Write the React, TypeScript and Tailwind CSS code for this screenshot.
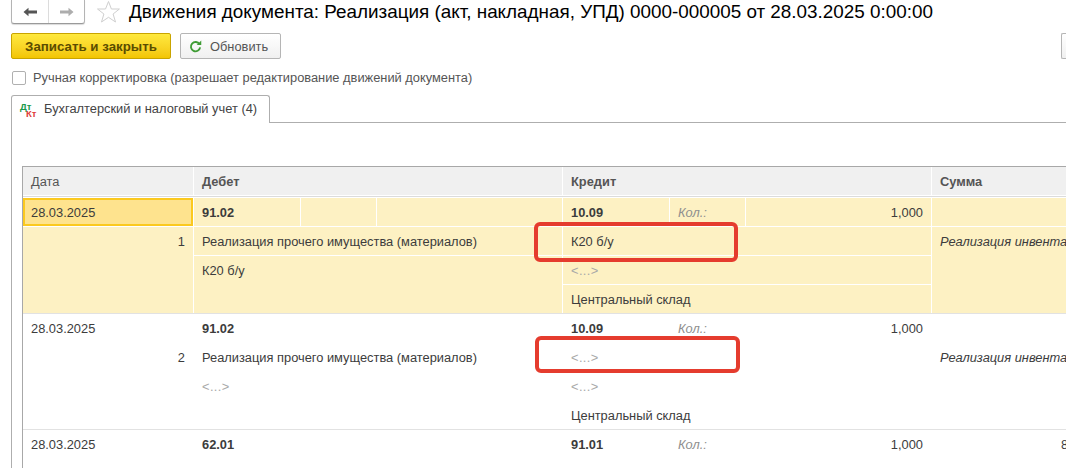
const yellow = "bg-[#fdf1c3]";

function BackForward() {
  return (
    <div className="flex h-[24px] w-[74px] rounded-b-[3px] border border-t-0 border-[#b4b4b4] border-b-[#9a9a9a] bg-white shadow-[0_1px_1px_rgba(0,0,0,0.15)]">
      <div className="flex w-[37px] items-center justify-center border-r border-[#dcdcdc]">
        <svg width="14" height="12" viewBox="0 0 14 12">
          <path d="M5.500 1.700.5 6l5 4.300V7.400H14V4.600H5.500z" fill="#555555" />
        </svg>
      </div>
      <div className="flex flex-1 items-center justify-center">
        <svg width="14" height="12" viewBox="0 0 14 12">
          <path d="M8.500 1.700 13.500 6l-5 4.300V7.400H0V4.600h8.500z" fill="#adadad" />
        </svg>
      </div>
    </div>
  );
}

function Star() {
  return (
    <svg width="25" height="24" viewBox="0 0 25 24" className="ml-[11px]">
      <path
        d="M12.500 1.500 15.400 9h8l-6.300 5 2.400 8-7-4.700L5.500 22l2.400-8L1.500 9h8z"
        fill="none"
        stroke="#cfcfcf"
        strokeWidth="1"
      />
    </svg>
  );
}

function RefreshIcon() {
  return (
    <svg width="13" height="13" viewBox="0 0 14 14">
      <path d="M11.300 4.500A5 5 0 1 0 12 8" fill="none" stroke="#3f9c35" strokeWidth="2" />
      <path d="M8.300 5.300h4.900V.6z" fill="#3f9c35" />
    </svg>
  );
}

function DtKtIcon() {
  return (
    <div className="relative mt-[2px] h-[16px] w-[17px] text-[9.5px] leading-[8px] font-bold">
      <span className="absolute top-0 left-0 text-[#1a9a4a]">Дт</span>
      <span className="absolute top-[7px] left-[6px] text-[#e0403a]">Кт</span>
    </div>
  );
}

function Placeholder() {
  return <span className="tracking-[0.4px] text-[#a8a8a8]">&lt;...&gt;</span>;
}

function AccountCell({
  code,
  qty,
  value,
  bg,
}: {
  code: string;
  qty?: boolean;
  value?: string;
  bg: string;
}) {
  return (
    <div className="grid h-[28px] grid-cols-[106px_75px_1fr] gap-x-px">
      <div className={`${bg} pt-[7px] pl-[8px] font-bold`}>{code}</div>
      <div className={`${bg} pt-[7px] pl-[8px] text-[#8f8f8f] italic`}>{qty ? "Кол.:" : ""}</div>
      <div className={`${bg} pt-[7px] pr-[8px] text-right`}>{value}</div>
    </div>
  );
}

function EntryRow({
  num,
  selected,
  debit2,
  credit2,
  credit3,
}: {
  num: number;
  selected?: boolean;
  debit2: React.ReactNode;
  credit2: React.ReactNode;
  credit3: React.ReactNode;
}) {
  const bg = selected ? yellow : "bg-white";
  const cell = `${bg} pt-[7px] pl-[8px]`;
  return (
    <div className="grid h-[115px] grid-cols-[170px_368px_368px_200px] grid-rows-[28px_28px_28px_28px] gap-px bg-white">
      <div
        className={
          selected
            ? "border-2 border-[#fbc91f] bg-[#fee38e] pt-[5px] pl-[6px]"
            : "bg-white pt-[7px] pl-[8px]"
        }
      >
        28.03.2025
      </div>
      <AccountCell code="91.02" bg={bg} />
      <AccountCell code="10.09" qty value="1,000" bg={bg} />
      <div className={bg} />

      <div className={`${bg} row-span-3 pt-[7px] pr-[8px] text-right`}>{num}</div>
      <div className={cell}>Реализация прочего имущества (материалов)</div>
      <div className={cell}>{credit2}</div>
      <div className={`${cell} row-span-3 overflow-hidden whitespace-nowrap italic`}>Реализация инвентаря</div>

      <div className={`${cell} row-span-2`}>{debit2}</div>
      <div className={cell}>{credit3}</div>
      <div className={cell}>Центральный склад</div>
    </div>
  );
}

export default function App() {
  return (
    <div className="relative h-[468px] w-[1066px] overflow-hidden bg-white font-['Liberation_Sans',Arial,sans-serif] text-[12.85px] leading-[15px] text-[#3c3c3c]">
      {/* Title bar */}
      <div className="flex h-[33px] items-start pl-[11px]">
        <BackForward />
        <Star />
        <h1 className="ml-[8px] text-[18.87px] leading-[23px] font-normal whitespace-nowrap text-black">
          Движения документа: Реализация (акт, накладная, УПД) 0000-000005 от 28.03.2025 0:00:00
        </h1>
      </div>

      {/* Command bar */}
      <div className="flex h-[26px] items-stretch pl-[11px]">
        <button className="w-[160px] rounded-[2px] border border-[#c9a400] bg-gradient-to-b from-[#ffe93d] to-[#f3c500] text-[13.3px] font-bold text-[#5a4c00]">
          Записать и закрыть
        </button>
        <button className="ml-[9px] flex w-[101px] items-center rounded-[2px] border border-[#b5b5b5] bg-gradient-to-b from-white to-[#f0f0f0] pl-[8px] text-[#555555]">
          <RefreshIcon />
          <span className="ml-[8px]">Обновить</span>
        </button>
        <div className="ml-auto w-[5px] rounded-l-[2px] border border-r-0 border-[#b5b5b5] bg-gradient-to-b from-white to-[#f0f0f0]" />
      </div>

      {/* Manual adjustment checkbox */}
      <div className="mt-[12px] flex h-[14px] items-center pl-[12px] text-[#555555]">
        <div className="h-[14px] w-[14px] rounded-[2px] border border-[#b0b0b0] bg-white" />
        <span className="ml-[7px] leading-[14px]">Ручная корректировка (разрешает редактирование движений документа)</span>
      </div>

      {/* Tab strip */}
      <div className="mt-[10px] flex h-[28px] pl-[11px]">
        <div className="flex w-[259px] items-start rounded-t-[3px] border border-b-0 border-[#aeaeae] bg-white pt-[5px] pl-[8px] text-[#444444]">
          <DtKtIcon />
          <span className="ml-[7px]">Бухгалтерский и налоговый учет (4)</span>
        </div>
        <div className="flex-1 border-b border-[#aeaeae]" />
      </div>

      {/* Tab page */}
      <div className="ml-[11px] h-[346px] border-l border-[#aeaeae] pt-[43px] pl-[10px]">
        <div className="h-[303px] border-t border-l border-[#a8a8a8]">
          <div className="grid h-[30px] grid-cols-[170px_368px_368px_200px] gap-x-px border-b border-[#dcdcdc] bg-white pb-px text-[#555555]">
            <div className="bg-[#f0f0f0] pt-[7px] pl-[8px]">Дата</div>
            <div className="bg-[#f0f0f0] pt-[7px] pl-[8px] font-bold">Дебет</div>
            <div className="bg-[#f0f0f0] pt-[7px] pl-[8px] font-bold">Кредит</div>
            <div className="bg-[#f0f0f0] pt-[7px] pl-[8px] font-bold">Сумма</div>
          </div>
          <div className="h-px bg-white" />
          <div className="border-b border-[#e2e2e2]">
            <EntryRow
              num={1}
              selected
              debit2="К20 б/у"
              credit2="К20 б/у"
              credit3={<Placeholder />}
            />
          </div>
          <div className="border-b border-[#e2e2e2]">
            <EntryRow
              num={2}
              debit2={<Placeholder />}
              credit2={<Placeholder />}
              credit3={<Placeholder />}
            />
          </div>
          <div className="grid h-[28px] grid-cols-[170px_368px_368px_200px] gap-px">
            <div className="pt-[7px] pl-[8px]">28.03.2025</div>
            <AccountCell code="62.01" bg="bg-white" />
            <AccountCell code="91.01" qty value="1,000" bg="bg-white" />
            <div className="pt-[7px] pl-[129px] whitespace-nowrap">8 000,00</div>
          </div>
        </div>
      </div>

      {/* Red markup over the screenshot */}
      <div className="absolute top-[222px] left-[534px] h-[40px] w-[204px] rounded-[6px] border-[4px] border-[#e53c2e]" />
      <div className="absolute top-[336px] left-[535px] h-[37px] w-[205px] rounded-[6px] border-[4px] border-[#e53c2e]" />
    </div>
  );
}
